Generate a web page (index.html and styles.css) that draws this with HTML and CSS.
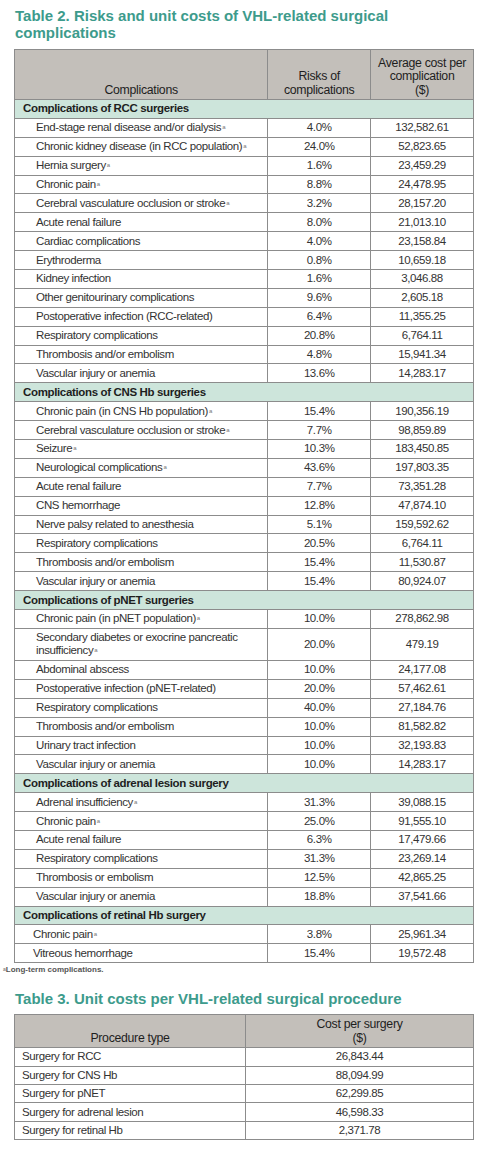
FILE: index.html
```html
<!DOCTYPE html>
<html lang="en">
<head>
    <meta charset="UTF-8">
    <meta name="viewport" content="width=device-width, initial-scale=1.0">
    <title>VHL surgical costs</title>
    <link rel="stylesheet" href="styles.css">
</head>
<body>
    <div class="page">
        <h2 class="tbl-title">Table 2. Risks and unit costs of VHL-related surgical complications</h2>
        <table class="tbl tbl2">
            <thead>
                <tr>
                    <th class="c1">Complications</th>
                    <th class="c2">Risks of<br>complications</th>
                    <th class="c3">Average cost per<br>complication<br>($)</th>
                </tr>
            </thead>
            <tbody>
                <tr class="sec"><td colspan="3">Complications of RCC surgeries</td></tr>
                <tr><td class="name">End-stage renal disease and/or dialysis<sup>a</sup></td><td>4.0%</td><td>132,582.61</td></tr>
                <tr><td class="name">Chronic kidney disease (in RCC population)<sup>a</sup></td><td>24.0%</td><td>52,823.65</td></tr>
                <tr><td class="name">Hernia surgery<sup>a</sup></td><td>1.6%</td><td>23,459.29</td></tr>
                <tr><td class="name">Chronic pain<sup>a</sup></td><td>8.8%</td><td>24,478.95</td></tr>
                <tr><td class="name">Cerebral vasculature occlusion or stroke<sup>a</sup></td><td>3.2%</td><td>28,157.20</td></tr>
                <tr><td class="name">Acute renal failure</td><td>8.0%</td><td>21,013.10</td></tr>
                <tr><td class="name">Cardiac complications</td><td>4.0%</td><td>23,158.84</td></tr>
                <tr><td class="name">Erythroderma</td><td>0.8%</td><td>10,659.18</td></tr>
                <tr><td class="name">Kidney infection</td><td>1.6%</td><td>3,046.88</td></tr>
                <tr><td class="name">Other genitourinary complications</td><td>9.6%</td><td>2,605.18</td></tr>
                <tr><td class="name">Postoperative infection (RCC-related)</td><td>6.4%</td><td>11,355.25</td></tr>
                <tr><td class="name">Respiratory complications</td><td>20.8%</td><td>6,764.11</td></tr>
                <tr><td class="name">Thrombosis and/or embolism</td><td>4.8%</td><td>15,941.34</td></tr>
                <tr><td class="name">Vascular injury or anemia</td><td>13.6%</td><td>14,283.17</td></tr>

                <tr class="sec"><td colspan="3">Complications of CNS Hb surgeries</td></tr>
                <tr><td class="name">Chronic pain (in CNS Hb population)<sup>a</sup></td><td>15.4%</td><td>190,356.19</td></tr>
                <tr><td class="name">Cerebral vasculature occlusion or stroke<sup>a</sup></td><td>7.7%</td><td>98,859.89</td></tr>
                <tr><td class="name">Seizure<sup>a</sup></td><td>10.3%</td><td>183,450.85</td></tr>
                <tr><td class="name">Neurological complications<sup>a</sup></td><td>43.6%</td><td>197,803.35</td></tr>
                <tr><td class="name">Acute renal failure</td><td>7.7%</td><td>73,351.28</td></tr>
                <tr><td class="name">CNS hemorrhage</td><td>12.8%</td><td>47,874.10</td></tr>
                <tr><td class="name">Nerve palsy related to anesthesia</td><td>5.1%</td><td>159,592.62</td></tr>
                <tr><td class="name">Respiratory complications</td><td>20.5%</td><td>6,764.11</td></tr>
                <tr><td class="name">Thrombosis and/or embolism</td><td>15.4%</td><td>11,530.87</td></tr>
                <tr><td class="name">Vascular injury or anemia</td><td>15.4%</td><td>80,924.07</td></tr>

                <tr class="sec"><td colspan="3">Complications of pNET surgeries</td></tr>
                <tr><td class="name">Chronic pain (in pNET population)<sup>a</sup></td><td>10.0%</td><td>278,862.98</td></tr>
                <tr class="two"><td class="name">Secondary diabetes or exocrine pancreatic<br>insufficiency<sup>a</sup></td><td>20.0%</td><td>479.19</td></tr>
                <tr><td class="name">Abdominal abscess</td><td>10.0%</td><td>24,177.08</td></tr>
                <tr><td class="name">Postoperative infection (pNET-related)</td><td>20.0%</td><td>57,462.61</td></tr>
                <tr><td class="name">Respiratory complications</td><td>40.0%</td><td>27,184.76</td></tr>
                <tr><td class="name">Thrombosis and/or embolism</td><td>10.0%</td><td>81,582.82</td></tr>
                <tr><td class="name">Urinary tract infection</td><td>10.0%</td><td>32,193.83</td></tr>
                <tr><td class="name">Vascular injury or anemia</td><td>10.0%</td><td>14,283.17</td></tr>

                <tr class="sec"><td colspan="3">Complications of adrenal lesion surgery</td></tr>
                <tr><td class="name">Adrenal insufficiency<sup>a</sup></td><td>31.3%</td><td>39,088.15</td></tr>
                <tr><td class="name">Chronic pain<sup>a</sup></td><td>25.0%</td><td>91,555.10</td></tr>
                <tr><td class="name">Acute renal failure</td><td>6.3%</td><td>17,479.66</td></tr>
                <tr><td class="name">Respiratory complications</td><td>31.3%</td><td>23,269.14</td></tr>
                <tr><td class="name">Thrombosis or embolism</td><td>12.5%</td><td>42,865.25</td></tr>
                <tr><td class="name">Vascular injury or anemia</td><td>18.8%</td><td>37,541.66</td></tr>

                <tr class="sec"><td colspan="3">Complications of retinal Hb surgery</td></tr>
                <tr><td class="name name-sm">Chronic pain<sup>a</sup></td><td>3.8%</td><td>25,961.34</td></tr>
                <tr><td class="name name-sm">Vitreous hemorrhage</td><td>15.4%</td><td>19,572.48</td></tr>
            </tbody>
        </table>
        <p class="note"><sup>a</sup>Long-term complications.</p>

        <h2 class="tbl-title tbl-title3">Table 3. Unit costs per VHL-related surgical procedure</h2>
        <table class="tbl tbl3">
            <thead>
                <tr>
                    <th class="p1">Procedure type</th>
                    <th class="p2">Cost per surgery<br>($)</th>
                </tr>
            </thead>
            <tbody>
                <tr><td class="proc">Surgery for RCC</td><td>26,843.44</td></tr>
                <tr><td class="proc">Surgery for CNS Hb</td><td>88,094.99</td></tr>
                <tr><td class="proc">Surgery for pNET</td><td>62,299.85</td></tr>
                <tr><td class="proc">Surgery for adrenal lesion</td><td>46,598.33</td></tr>
                <tr><td class="proc">Surgery for retinal Hb</td><td>2,371.78</td></tr>
            </tbody>
        </table>
    </div>
</body>
</html>
```

FILE: styles.css
```css
*{
    padding: 0;
    margin: 0;
    box-sizing: border-box;
}
body{
    background-color: #fff;
    font-family: "Liberation Sans", Arial, sans-serif;
    color: #333;
}
.page{
    width: 494px;
    padding: 7px 20px 0 14px;
}
.tbl-title{
    width: 400px;
    font-size: 15px;
    line-height: 17px;
    font-weight: bold;
    color: #3d9b8c;
    padding-left: 1px;
}
.tbl-title3{
    width: auto;
    margin-top: 14px;
}
.tbl{
    border-collapse: collapse;
    width: 460px;
    margin-top: 8px;
    font-size: 11.5px;
    letter-spacing: -0.4px;
}
.tbl td,
.tbl th{
    border: 1px solid #8c8c8c;
    text-align: center;
    vertical-align: middle;
    padding: 0 4px;
    line-height: 13px;
}
.tbl th{
    background-color: #c3bfba;
    font-weight: normal;
    font-size: 12.3px;
    letter-spacing: -0.3px;
    color: #1e1e1e;
    vertical-align: bottom;
    line-height: 13.5px;
    padding-bottom: 2px;
}
.tbl2 th{
    height: 50px;
}
.tbl2 .c1{
    width: 254px;
}
.tbl2 .c2,
.tbl2 .c3{
    width: 103px;
}
.tbl2 td{
    height: 18.9px;
}
.tbl2 tr.two td{
    height: 32px;
}
.tbl2 td.name{
    text-align: left;
    padding-left: 21px;
    padding-right: 2px;
}
.tbl2 td.name-sm{
    padding-left: 18px;
}
.tbl2 tr.sec td{
    background-color: #cde5db;
    text-align: left;
    padding-left: 8px;
    color: #1e1e1e;
    font-size: 11.5px;
    font-weight: bold;
    letter-spacing: -0.35px;
}
.tbl sup{
    font-size: 6px;
    line-height: 0;
    vertical-align: 2px;
    color: #777;
    margin-left: 1px;
}
.note{
    margin-left: -11px;
    font-size: 8px;
    font-weight: bold;
    color: #555;
    line-height: 13px;
}
.note sup{
    font-size: 5px;
    vertical-align: 1px;
    color: #888;
}
.tbl3{
    margin-top: 7px;
}
.tbl3 th{
    height: 33px;
}
.tbl3 .p1{
    width: 231px;
}
.tbl3 td{
    height: 18.4px;
}
.tbl3 td.proc{
    text-align: left;
    padding-left: 7px;
}
```
